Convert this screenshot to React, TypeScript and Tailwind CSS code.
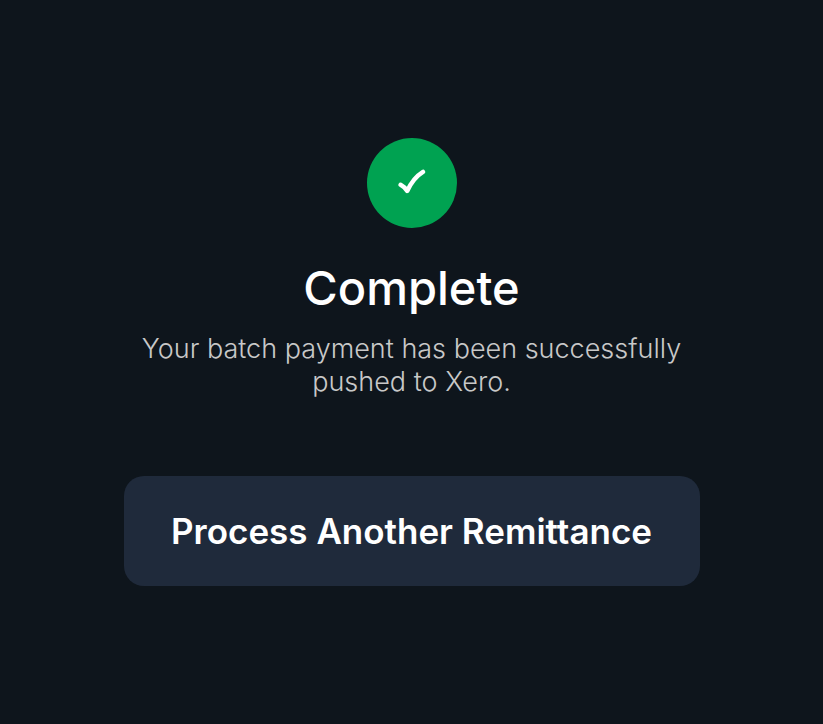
export default function App() {
  return (
    <main className="flex min-h-screen flex-col items-center justify-center bg-[#0e151c] px-6 font-['Inter',sans-serif] text-white">
      <div className="flex size-[90px] items-center justify-center rounded-full bg-[#00a251]">
        <svg className="h-7 w-7" viewBox="0 0 28 28" fill="none" stroke="currentColor" strokeWidth="4.4" strokeLinecap="round" strokeLinejoin="round" aria-hidden="true">
          <path d="M2.6 15.8 Q6.5 17.8 9.2 22 Q15 9 25 2.8" />
        </svg>
      </div>
      <h1 className="mt-8 text-[47px] leading-[55px] font-medium">Complete</h1>
      <p className="mt-[17px] max-w-xl text-center text-[27px] leading-[33px] font-light text-[#c8c8c8]">
        Your batch payment has been successfully pushed to Xero.
      </p>
      <button type="button" className="mt-[78px] h-[110px] w-full max-w-xl rounded-[20px] bg-[#1f2a3b] text-[35px] font-semibold">
        Process Another Remittance
      </button>
    </main>
  );
}
